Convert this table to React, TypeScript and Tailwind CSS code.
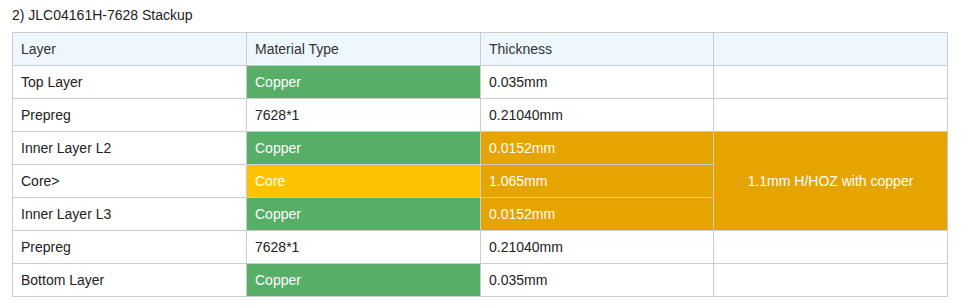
import React from 'react'

type Cell = { text: string; tone?: 'green' | 'yellow' | 'orange' }

type Row = {
  layer: string
  material: Cell
  thickness: Cell
}

const ROWS: Row[] = [
  { layer: 'Top Layer', material: { text: 'Copper', tone: 'green' }, thickness: { text: '0.035mm' } },
  { layer: 'Prepreg', material: { text: '7628*1' }, thickness: { text: '0.21040mm' } },
  { layer: 'Inner Layer L2', material: { text: 'Copper', tone: 'green' }, thickness: { text: '0.0152mm', tone: 'orange' } },
  { layer: 'Core>', material: { text: 'Core', tone: 'yellow' }, thickness: { text: '1.065mm', tone: 'orange' } },
  { layer: 'Inner Layer L3', material: { text: 'Copper', tone: 'green' }, thickness: { text: '0.0152mm', tone: 'orange' } },
  { layer: 'Prepreg', material: { text: '7628*1' }, thickness: { text: '0.21040mm' } },
  { layer: 'Bottom Layer', material: { text: 'Copper', tone: 'green' }, thickness: { text: '0.035mm' } },
]

const toneClass = (tone?: Cell['tone']) => {
  if (tone === 'green') return 'bg-[#57ae67] text-white'
  if (tone === 'yellow') return 'bg-[#fec300] text-white'
  if (tone === 'orange') return 'bg-[#e6a400] text-white'
  return 'text-[#222222]'
}

const td = 'border border-[#cccccc] px-2 h-[33px] align-middle'

export default function App() {
  return (
    <div className="w-[978px] h-[308px] bg-white font-['Liberation_Sans',Arial,sans-serif] text-[14px]">
      <div className="pl-3 pt-[6px] leading-[18px] text-[#222222] mb-2">2) JLC04161H-7628 Stackup</div>
      <table className="ml-3 w-[935px] table-fixed border-collapse">
        <colgroup>
          <col className="w-[234px]" />
          <col className="w-[234px]" />
          <col className="w-[233px]" />
          <col className="w-[234px]" />
        </colgroup>
        <thead>
          <tr className="bg-[#eef7fd] text-[#333333]">
            <th className={`${td} text-left font-normal`}>Layer</th>
            <th className={`${td} text-left font-normal`}>Material Type</th>
            <th className={`${td} text-left font-normal`}>Thickness</th>
            <th className={`${td}`}></th>
          </tr>
        </thead>
        <tbody>
          {ROWS.map((row, i) => (
            <tr key={i}>
              <td className={`${td} text-[#222222]`}>{row.layer}</td>
              <td className={`${td} ${toneClass(row.material.tone)}`}>{row.material.text}</td>
              <td className={`${td} ${toneClass(row.thickness.tone)}`}>{row.thickness.text}</td>
              {i === 2 ? (
                <td rowSpan={3} className={`${td} bg-[#e6a400] text-white text-center`}>
                  1.1mm H/HOZ with copper
                </td>
              ) : i === 3 || i === 4 ? null : (
                <td className={td}></td>
              )}
            </tr>
          ))}
        </tbody>
      </table>
    </div>
  )
}
